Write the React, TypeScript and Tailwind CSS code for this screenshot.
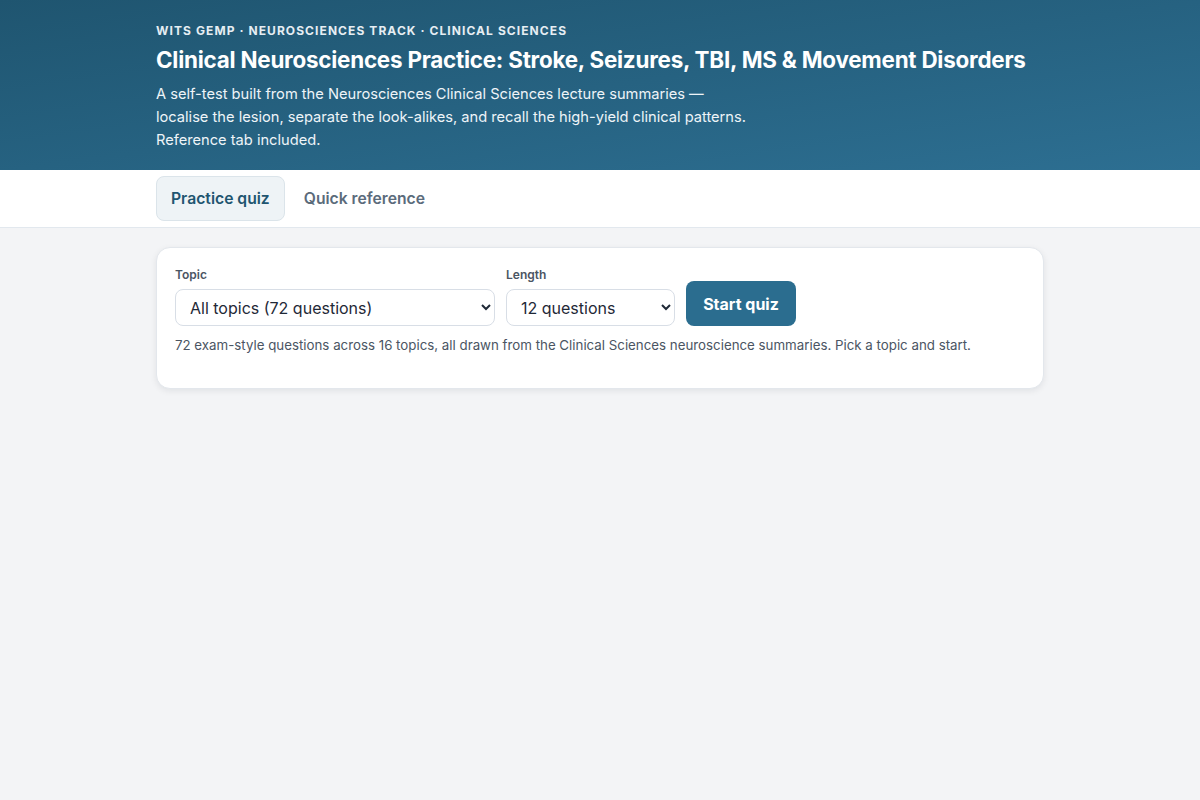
import { useState } from "react";

const TOPICS = [
  "All topics (72 questions)",
  "Stroke syndromes",
  "Seizures & epilepsy",
  "Traumatic brain injury",
  "Multiple sclerosis",
  "Movement disorders",
];

const LENGTHS = ["6 questions", "12 questions", "24 questions", "All questions"];

const App = () => {
  const [tab, setTab] = useState<"quiz" | "ref">("quiz");
  const [topic, setTopic] = useState(TOPICS[0]);
  const [length, setLength] = useState(LENGTHS[1]);

  return (
    <div
      className="min-h-screen bg-[#f3f4f6] text-[#1f2937]"
      style={{ fontFamily: "Inter, 'Liberation Sans', sans-serif" }}
    >
      <header className="h-[170px] bg-gradient-to-br from-[#1f5570] to-[#2d6f92] text-white">
        <div className="mx-auto max-w-[888px] pt-[22px]">
          <div className="text-[12px] font-bold uppercase tracking-[0.09em] text-[#e6eef3]">
            Wits GEMP · Neurosciences Track · Clinical Sciences
          </div>
          <h1 className="mt-[6px] text-[22.4px] font-bold leading-[28px] tracking-[-0.01em]">
            Clinical Neurosciences Practice: Stroke, Seizures, TBI, MS &amp; Movement Disorders
          </h1>
          <p className="mt-[9px] text-[14.65px] leading-[23px] text-[#eef4f8]">
            A self-test built from the Neurosciences Clinical Sciences lecture summaries —
            <br />
            localise the lesion, separate the look-alikes, and recall the high-yield clinical patterns.
            <br />
            Reference tab included.
          </p>
        </div>
      </header>

      <nav className="h-[58px] border-b border-[#e2e8ee] bg-white">
        <div className="mx-auto flex max-w-[888px] gap-[4px] pt-[6px]">
          <button
            onClick={() => setTab("quiz")}
            className={
              tab === "quiz"
                ? "h-[45px] rounded-lg border border-[#dbe4ea] bg-[#eef3f6] px-[14px] text-[15.7px] font-semibold text-[#1f5570]"
                : "h-[45px] rounded-lg border border-transparent px-[14px] text-[15.7px] font-semibold text-[#5b6b7b]"
            }
          >
            Practice quiz
          </button>
          <button
            onClick={() => setTab("ref")}
            className={
              tab === "ref"
                ? "h-[45px] rounded-lg border border-[#dbe4ea] bg-[#eef3f6] px-[14px] text-[15.7px] font-semibold text-[#1f5570]"
                : "h-[45px] rounded-lg border border-transparent px-[14px] text-[15.7px] font-semibold text-[#5b6b7b]"
            }
          >
            Quick reference
          </button>
        </div>
      </nav>

      <main className="mx-auto max-w-[888px] pt-[19px]">
        <section className="h-[142px] rounded-[14px] border border-[#e3e7ec] bg-white px-[18px] pt-[19px] shadow-[0_2px_6px_rgba(15,23,42,0.08)]">
          <div className="flex items-end gap-[11px]">
            <label className="flex flex-col">
              <span className="mb-[6px] text-[12px] font-semibold leading-[16px] text-[#4b5563]">
                Topic
              </span>
              <select
                value={topic}
                onChange={(e) => setTopic(e.target.value)}
                className="h-[37px] w-[320px] rounded-lg border border-[#d8dee6] bg-white pl-[10px] pr-[6px] text-[16px] text-[#1f2937]"
              >
                {TOPICS.map((t) => (
                  <option key={t}>{t}</option>
                ))}
              </select>
            </label>
            <label className="flex flex-col">
              <span className="mb-[6px] text-[12px] font-semibold leading-[16px] text-[#4b5563]">
                Length
              </span>
              <select
                value={length}
                onChange={(e) => setLength(e.target.value)}
                className="h-[37px] w-[169px] rounded-lg border border-[#d8dee6] bg-white pl-[10px] pr-[6px] text-[16px] text-[#1f2937]"
              >
                {LENGTHS.map((l) => (
                  <option key={l}>{l}</option>
                ))}
              </select>
            </label>
            <button className="h-[45px] w-[110px] rounded-lg bg-[#2b6d8f] text-[16px] font-bold text-white">
              Start quiz
            </button>
          </div>
          <p className="mt-[10px] text-[13.3px] leading-[18px] text-[#4b5563]">
            72 exam-style questions across 16 topics, all drawn from the Clinical Sciences
            neuroscience summaries. Pick a topic and start.
          </p>
        </section>
      </main>
    </div>
  );
};

export default App;
